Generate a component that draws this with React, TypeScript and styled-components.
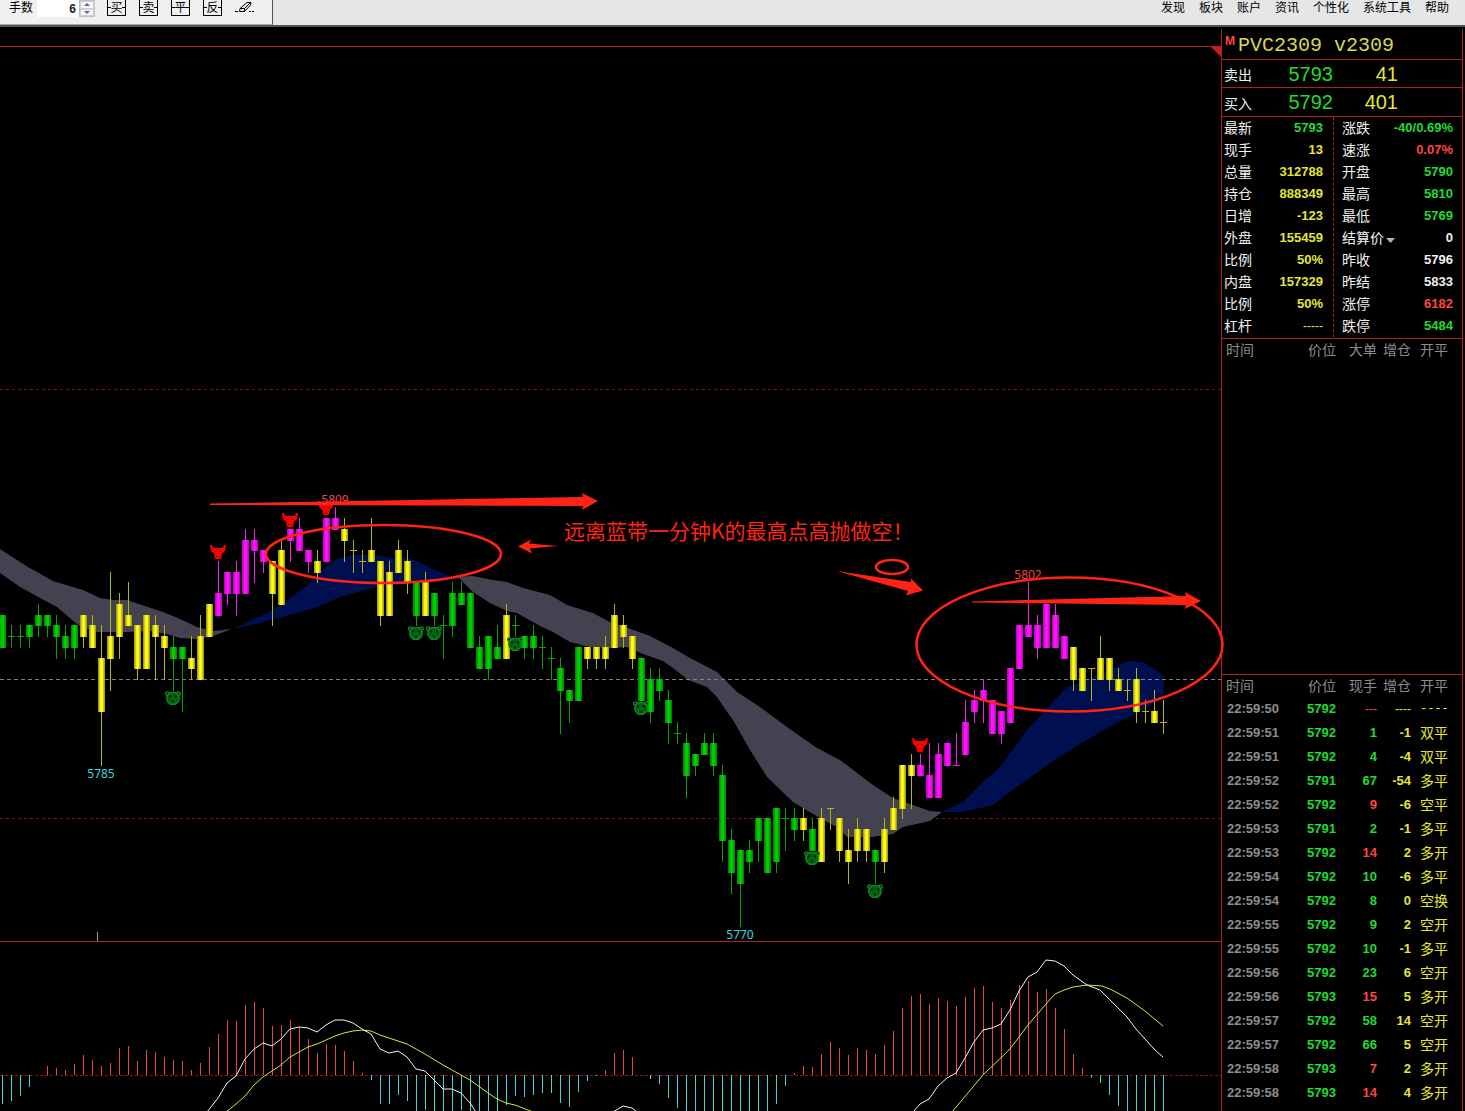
import React from "react";
import styled, { createGlobalStyle } from "styled-components";

const RED_LINE = "#b41e1e";
const COLORS = {
  green: "#1fdc32",
  yellow: "#e6e632",
  red: "#ff4646",
  white: "#f0f0f0",
  gray: "#8c8c8c",
};
type Tone = keyof typeof COLORS;

const GlobalStyle = createGlobalStyle`
  * { box-sizing: border-box; }
  body { margin: 0; background: #000; overflow: hidden; font-family: "Liberation Sans", "Noto Sans CJK SC", sans-serif; }
  button, input { font: inherit; }
`;

/* ---------- shell ---------- */
const Shell = styled.div`
  display: flex;
  flex-direction: column;
  height: 100vh;
  overflow: hidden;
  background: #000;
`;
const Header = styled.header`
  display: flex;
  justify-content: space-between;
  align-items: flex-start;
  flex: none;
  height: 27px;
  background: #e6e6e6;
  border-bottom: 2px solid #50545a;
  font-size: 12px;
  color: #000;
`;
const Toolbar = styled.div`
  display: flex;
  align-items: flex-start;
  gap: 12px;
  height: 25px;
  padding: 0 17px 0 9px;
  background: #f0f0f0;
  border-right: 1px solid #50545a;
  border-bottom: 1px solid #a0a8b0;
`;
const LotField = styled.div`
  display: flex;
  align-items: flex-start;
  line-height: 16px;
`;
const LotLabel = styled.label`
  width: 28px;
`;
const LotInput = styled.input`
  width: 42px;
  height: 17px;
  padding: 0 3px;
  border: 0;
  background: #fff;
  text-align: right;
  font-weight: 700;
  color: #222;
`;
const Spinner = styled.div`
  display: flex;
  flex-direction: column;
  width: 16px;
  height: 17px;
  border: 1px solid #c0c0c0;
`;
const SpinButton = styled.button`
  display: flex;
  flex: 1;
  align-items: center;
  justify-content: center;
  min-height: 0;
  padding: 0;
  border: 1px solid #d0d0d0;
  background: #f6f6f6;
`;
const Tools = styled.div`
  display: flex;
  gap: 13px;
`;
const ToolButton = styled.button`
  position: relative;
  width: 19px;
  height: 16px;
  padding: 0;
  border: 1px solid #000;
  border-top-width: 0;
  background: transparent;
  color: #000;
  font-size: 12px;
  line-height: 14px;
  &::before, &::after {
    content: "";
    position: absolute;
    top: 7px;
    width: 3px;
    height: 1px;
    background: #000;
  }
  &::before { left: 0; }
  &::after { right: 0; }
`;
const EraserButton = styled.button`
  width: 20px;
  height: 16px;
  padding: 0;
  border: 0;
  background: transparent;
  svg { display: block; }
`;
const Menu = styled.nav`
  display: flex;
  gap: 14px;
  padding-right: 16px;
  line-height: 16px;
`;
const MenuLink = styled.a`
  color: #000;
  text-decoration: none;
`;
const Body = styled.main`
  display: flex;
  flex: 1;
  min-height: 0;
`;

/* ---------- charts ---------- */
const ChartArea = styled.section`
  position: relative;
  z-index: 1;
  flex: 1;
  min-width: 0;
`;
const ChartStrip = styled.div`
  position: relative;
  height: 20px;
  border-bottom: 1px solid ${RED_LINE};
`;
const Corner = styled.svg`
  position: absolute;
  right: 0;
  top: 20px;
`;
const ChartSvg = styled.svg`
  display: block;
  width: 100%;
  overflow: visible;
`;
const IndicatorPane = styled.div`
  border-top: 1px solid ${RED_LINE};
`;
const PriceLabel = styled.text<{ $color: string }>`
  font-family: "Noto Sans", sans-serif;
  font-size: 12px;
  text-anchor: middle;
  fill: ${(p) => p.$color};
`;
const NoteText = styled.text`
  font-family: "Noto Sans CJK SC", sans-serif;
  font-size: 21px;
  font-weight: 400;
  fill: #ff2314;
`;

const tickY = (p: number) => Math.floor(926 - (p - 5770) * 10.72);
const barX = (i: number) => 2 + 9 * i;

// colour, high, body top, body bottom, low (offsets from 5700)
const CANDLES = `g99,99,96,96 g98,97,97,96 g98,97,97,96 g98,98,97,96 g100,99,98,97 g99,99,98,97 g99,98,97,95 g98,97,96,95 g98,98,96,95 y99,99,97,96
y99,98,96,96 y98,95,90,85 y103,97,95,92 y101,100,97,95 y102,99,98,98 y98,98,94,93 y99,99,94,94 y99,98,97,93 y98,97,96,93 g97,96,95,92
g96,96,95,90 y97,95,94,93 y99,97,93,93 y100,100,97,97 m104,101,99,99 m103,103,101,100 m104,103,101,99 m107,106,101,101 m107,106,105,102 m105,105,104,103
y104,104,101,98 y106,105,100,100 m107,107,106,104 m108,107,105,105 m105,105,104,103 y105,104,103,102 m108,108,104,104 m109,108,107,107 y108,107,106,104 y106,105,105,103
y105,104,104,103 y108,105,104,104 y104,104,99,98 y104,103,99,99 y106,105,103,103 y105,104,102,101 g102,102,99,98 y103,102,99,99 g101,101,99,98 g99,98,98,95
g102,101,98,97 g102,101,100,100 g101,101,96,96 g97,96,94,94 g97,97,94,93 g98,96,95,95 y100,99,95,95 g99,98,98,97 g97,97,96,95 g98,97,96,95
g97,96,96,94 g96,95,95,93 g95,94,92,88 g92,92,91,89 g96,96,91,91 y96,96,95,94 y96,96,95,94 y97,96,95,94 y100,99,96,96 y99,98,97,96
y97,97,95,94 g95,95,91,91 g94,93,90,89 g94,93,92,91 g92,91,89,87 g89,88,88,87 g88,87,84,82 g86,86,85,84 g88,87,86,86 g88,87,85,84
g85,84,78,76 g79,78,75,73 g77,77,74,70 g78,77,76,75 g80,80,78,76 g80,80,75,75 g81,81,76,75 g81,80,80,77 g81,80,79,78 y81,80,79,78
g80,79,77,77 y81,80,76,76 y81,81,81,79 y80,80,77,76 y79,77,76,74 y80,79,77,76 y79,79,77,76 g77,77,76,74 y80,79,76,75 y82,81,79,79
y85,85,81,80 y86,85,84,81 m86,85,84,84 m87,84,82,82 m87,86,82,82 m87,87,85,85 m88,85,85,85 m91,89,86,86 m92,91,90,89 m93,92,91,89
m91,91,88,88 m90,90,88,87 m94,94,89,89 m98,98,94,94 m102,98,97,97 m99,98,96,95 m100,100,96,96 m100,99,96,96 m97,97,95,95 y96,96,93,92
y94,94,92,92 y94,94,94,91 y97,95,93,93 y95,95,93,92 y94,93,92,92 y93,92,92,91 y94,93,90,89 y91,90,90,89 y92,90,89,89 y91,89,89,88`
  .split(/\s+/)
  .map((s) => {
    const [high, top, bottom, low] = s.slice(1).split(",").map((n) => 5700 + Number(n));
    return { kind: s[0], high, top, bottom, low };
  });

const WICK: Record<string, string> = { g: "#0aa00a", y: "#b4b414", m: "#e628e6" };

// momentum histogram, three units to a pixel
const HISTOGRAM = [
  -86, -77, -62, -35, 0, 26, 22, 14, 34, 61, 46, 26, 37, 82, 88, 43, 74, 70, 55, 46, 43, 16, 37, 85, 124, 166, 163, 211, 220, 202,
  148, 150, 166, 145, 109, 67, 94, 91, 73, 43, 7, -14, -86, -86, -59, -77, -120, -104, -120, -120, -120, -104, -120, -120, -120, -120, -89, -62, -65, -59,
  -53, -53, -83, -95, -50, -17, -3, 16, 67, 76, 55, 0, -11, -26, -68, -98, -120, -120, -120, -120, -120, -120, -120, -120, -120, -120, -86, -32, 7, 28,
  25, 64, 100, 82, 61, 82, 76, 64, 91, 133, 202, 238, 244, 214, 232, 223, 208, 235, 262, 268, 220, 202, 226, 271, 283, 250, 259, 202, 139, 64,
  22, -8, -23, -59, -92, -120, -120, -120, -120, -120,
];

const FAST_LINES = [
  "207,1112 218,1098 227,1083 236,1076 245,1059 254,1049 263,1043 272,1046 281,1039 290,1029 299,1027 308,1028 317,1032 326,1025 335,1020 344,1020 353,1023 362,1029 371,1034 380,1049 389,1053 398,1051 407,1057 416,1069 425,1071 443,1089 452,1089 461,1093 470,1103 476,1112",
  "613,1112 623,1106 632,1108 637,1112",
  "913,1112 920,1104 929,1099 938,1086 947,1078 956,1073 965,1058 974,1042 983,1030 992,1028 1001,1024 1010,1010 1019,991 1028,977 1037,972 1046,960 1055,961 1064,966 1073,975 1087,985 1100,990 1118,1008 1127,1017 1136,1029 1145,1039 1154,1049 1163,1057",
];
const SLOW_LINES = [
  "226,1112 236,1104 245,1096 254,1085 263,1077 272,1071 281,1065 290,1057 299,1052 308,1047 317,1044 326,1040 335,1036 344,1033 353,1031 362,1030 371,1031 380,1035 398,1041 407,1044 425,1054 443,1065 461,1075 470,1080 488,1093 497,1099 506,1103 515,1105 533,1112",
  "952,1112 983,1075 1010,1049 1028,1025 1046,1004 1055,994 1064,990 1073,987 1087,985 1102,986 1110,989 1127,998 1145,1011 1163,1026",
];

const GRAY_BANDS = [
  "0,549 28,567 53,581 83,590 100,598 113,600 127,600 142,605 163,612 180,619 197,627 213,631 232,629 213,636 197,639 180,638 167,634 150,631 127,632 97,632 80,626 72,620 57,607 40,598 20,587 0,573",
  "453,577 473,576 493,580 507,582 523,588 550,595 567,605 593,613 610,622 620,625 650,636 673,648 690,658 717,672 737,692 760,707 787,727 817,748 840,760 873,785 893,798 910,804 930,811 942,812 930,821 903,827 893,834 872,837 847,837 837,827 823,820 793,802 767,777 750,750 733,720 725,709 717,697 707,687 688,680 673,668 663,661 643,654 627,647 610,648 590,647 570,642 553,632 540,626 517,613 507,611 490,603 473,592 460,579",
];
const BLUE_BANDS = [
  "233,629 250,621 267,613 280,605 297,593 310,583 322,570 337,559 353,555 377,555 390,558 403,557 417,561 433,569 452,577 462,578 440,580 400,583 372,588 340,597 317,607 283,617 267,621 247,626",
  "942,812 963,802 983,782 1000,767 1027,730 1050,705 1067,687 1093,677 1117,666 1127,661 1143,662 1153,668 1164,677 1164,697 1137,713 1113,725 1080,744 1053,761 1027,780 1010,792 993,805 963,812",
];

const BULLS = [[218, 552], [290, 520], [326, 508], [920, 745]];
const BEARS = [[173, 698], [416, 633], [434, 633], [515, 644], [641, 708], [812, 858], [875, 891]];

const Bull = ({ x, y }: { x: number; y: number }) => (
  <g transform={`translate(${x - 8} ${y - 7})`}>
    <path
      fill="#ff0000"
      d="M0.5 0H2L2.5 2L4 3H12L13.5 2L14 0H15.5L16 2L15 4L15.5 5L14 7L12.5 8L11.5 10V13L10 14H6L4.5 13V10L3.5 8L2 7L0.5 5L1 4L0 2Z"
    />
    <path fill="#500000" d="M5 6h1.4v1H5z M9.6 6H11v1H9.6z M6.2 11.4h1v1h-1z M8.8 11.4h1v1h-1z" />
  </g>
);
const Bear = ({ x, y }: { x: number; y: number }) => (
  <g transform={`translate(${x - 8} ${y - 7})`} fill="none" stroke="#0a8c20">
    <circle cx="2.4" cy="2.6" r="1.8" fill="#001c04" strokeWidth="1.3" />
    <circle cx="13.6" cy="2.6" r="1.8" fill="#001c04" strokeWidth="1.3" />
    <path fill="#065a14" strokeWidth="1.3" d="M4 2.5L6 1.6H10L12 2.5L14 5L14.4 8L13 11L10.5 13.4H5.5L3 11L1.6 8L2 5Z" />
    <path stroke="none" fill="#001c04" d="M4 4.6h2v1.6H4z M10 4.6h2v1.6h-2z" />
    <ellipse cx="8" cy="9.8" rx="2.2" ry="2.6" fill="#001c04" strokeWidth="1" />
    <path strokeWidth="1.4" d="M7.2 9.4h1.6" />
  </g>
);

const PriceChart = () => (
  <ChartSvg viewBox="0 47 1221 894" role="img" aria-label="PVC2309 K线图">
    <defs>
      {[["g", "#007800", "#00d200"], ["y", "#968c00", "#ffff1e"], ["m", "#b400b4", "#ff14ff"]].map(([id, edge, mid]) => (
        <linearGradient id={`body-${id}`} key={id}>
          <stop offset="0" stopColor={edge} />
          <stop offset="0.4" stopColor={mid} />
          <stop offset="0.6" stopColor={mid} />
          <stop offset="1" stopColor={edge} />
        </linearGradient>
      ))}
    </defs>
    <path d="M0 389.5H1221M0 818.5H1221" stroke="#7d1414" strokeDasharray="3 3" />
    {GRAY_BANDS.map((p) => <polygon key={p} points={p} fill="#444150" />)}
    {BLUE_BANDS.map((p) => <polygon key={p} points={p} fill="#000f50" />)}
    <path d="M0 679.5H1221" stroke="#828282" strokeDasharray="4 3" />
    <g shapeRendering="crispEdges">
      {CANDLES.map((c, i) => {
        const x = barX(i);
        const top = tickY(c.top);
        const doji = c.top === c.bottom;
        return (
          <g key={i}>
            <rect x={x} y={tickY(c.high)} width="1" height={tickY(c.low) - tickY(c.high) + 1} fill={WICK[c.kind]} />
            <rect x={x - 3} y={top} width="7" height={doji ? 1 : tickY(c.bottom) - top + 1} fill={doji ? WICK[c.kind] : `url(#body-${c.kind})`} />
          </g>
        );
      })}
    </g>
    {BULLS.map(([x, y]) => <Bull key={x} x={x} y={y} />)}
    {BEARS.map(([x, y]) => <Bear key={x} x={x} y={y} />)}
    <PriceLabel x="335" y="504" $color="#f04646">5809</PriceLabel>
    <PriceLabel x="1028" y="579" $color="#f04646">5802</PriceLabel>
    <PriceLabel x="101" y="778" $color="#32dcdc">5785</PriceLabel>
    <PriceLabel x="740" y="939" $color="#32dcdc">5770</PriceLabel>
    <path d="M97.5 932V941" stroke="#a0a0a0" />
    <g fill="#ff2314">
      <path d="M210 503.5L583 497L582 493L598 501L582 510L583 506L210 505Z" />
      <path d="M518 546.5L531 539.5L529 543.5L558 546L530 548.5L532 553.5Z" />
      <path d="M836.5 571L911 582L910.5 578L923 590.5L906 595.5L908 591Z" />
      <path d="M972 601.5L1186 596L1185 592L1201 601L1185 609L1186 605L972 602.5Z" />
    </g>
    <g fill="none" stroke="#ff2314" strokeWidth="2.6">
      <ellipse cx="383.5" cy="554" rx="117.5" ry="29" />
      <ellipse cx="892" cy="567" rx="16" ry="7" />
      <ellipse cx="1069.5" cy="644.5" rx="153" ry="67" />
    </g>
    <NoteText x="564" y="539">远离蓝带一分钟K的最高点高抛做空！</NoteText>
  </ChartSvg>
);

const IndicatorChart = () => (
  <IndicatorPane>
    <ChartSvg viewBox="0 942 1221 169" role="img" aria-label="MACD">
      <path d="M0 1075.5H1221" stroke="#8c1414" strokeDasharray="3 2" />
      <g shapeRendering="crispEdges">
        {HISTOGRAM.map((v, i) =>
          v === 0 ? null : (
            <rect key={i} x={barX(i)} y={v > 0 ? Math.round(1075 - v / 3) : 1075} width="1" height={Math.max(1, Math.round(Math.abs(v) / 3))} fill={v > 0 ? "#e64646" : "#46d2d7"} />
          ),
        )}
      </g>
      {SLOW_LINES.map((p) => <polyline key={p} points={p} fill="none" stroke="#d7e63c" />)}
      {FAST_LINES.map((p) => <polyline key={p} points={p} fill="none" stroke="#f5f5f5" />)}
    </ChartSvg>
  </IndicatorPane>
);

/* ---------- quote panel ---------- */
const QuotePanel = styled.aside`
  flex: none;
  width: 242px;
  margin: 2px 2px 0 0;
  border: 1px solid ${RED_LINE};
  border-width: 0 1px 0 1px;
  overflow: hidden;
  font-size: 14px;
  color: ${COLORS.white};
`;
const Title = styled.h1`
  display: flex;
  align-items: flex-start;
  gap: 2px;
  height: 31px;
  margin: 0;
  padding: 4px 0 0 3px;
  border-bottom: 1px solid ${RED_LINE};
  font-family: "Liberation Mono", monospace;
  font-size: 20px;
  font-weight: 400;
  line-height: 26px;
  white-space: pre;
  color: #d7d750;
`;
const Mark = styled.span`
  width: 11px;
  font: 700 12px/16px "Liberation Sans", sans-serif;
  color: ${COLORS.red};
`;
const BookRow = styled.div<{ $height: number }>`
  display: grid;
  grid-template-columns: 40px 69px 65px;
  align-items: center;
  height: ${(p) => p.$height}px;
  padding: 1px 0 0 2px;
  border-bottom: 1px solid ${RED_LINE};
`;
const BookValue = styled.span<{ $tone: Tone }>`
  font-size: 20px;
  text-align: right;
  color: ${(p) => COLORS[p.$tone]};
`;
const Stats = styled.div`
  display: grid;
  grid-template-columns: 112px 1fr;
  height: 222px;
  border-bottom: 1px solid ${RED_LINE};
`;
const StatList = styled.dl<{ $divider?: boolean }>`
  margin: 0;
  height: 220px;
  padding: ${(p) => (p.$divider ? "0 10px 0 2px" : "0 9px 0 8px")};
  border-right: ${(p) => (p.$divider ? `1px dashed ${RED_LINE}` : "0")};
`;
const StatRow = styled.div`
  display: flex;
  justify-content: space-between;
  align-items: center;
  height: 22px;
  line-height: 22px;
`;
const StatName = styled.dt`
  display: flex;
  align-items: center;
`;
const StatValue = styled.dd<{ $tone: Tone; $dash?: boolean }>`
  margin: 0;
  font-size: ${(p) => (p.$dash ? 12 : 13)}px;
  font-weight: ${(p) => (p.$dash ? 400 : 700)};
  color: ${(p) => COLORS[p.$tone]};
`;
const Drop = styled.button`
  display: flex;
  padding: 4px 0 0 2px;
  border: 0;
  background: transparent;
`;
const BigOrders = styled.div`
  height: 336px;
  border-bottom: 1px solid ${RED_LINE};
`;
const TickTable = styled.table`
  width: 240px;
  table-layout: fixed;
  border-collapse: collapse;
`;
const HeadCell = styled.th<{ $left?: number; $width: number }>`
  width: ${(p) => p.$width}px;
  height: 22px;
  padding: 0 0 0 ${(p) => p.$left ?? 0}px;
  font-weight: 400;
  line-height: 22px;
  text-align: ${(p) => (p.$left ? "left" : "right")};
  color: ${COLORS.gray};
`;
const Cell = styled.td<{ $tone: Tone; $dash?: boolean }>`
  height: 24px;
  padding: 0;
  font-size: ${(p) => (p.$dash ? 12 : 13)}px;
  font-weight: ${(p) => (p.$dash ? 400 : 700)};
  line-height: 24px;
  text-align: right;
  color: ${(p) => COLORS[p.$tone]};
`;
const TimeCell = styled(Cell)`
  padding-left: 5px;
  text-align: left;
`;
const TypeCell = styled(Cell)`
  padding-left: 9px;
  font-family: ${(p) => (p.$dash ? '"Liberation Mono", monospace' : "inherit")};
  font-size: ${(p) => (p.$dash ? 12 : 14)}px;
  font-weight: 400;
  text-align: left;
`;

const LEFT_STATS: [string, string, Tone][] = [
  ["最新", "5793", "green"], ["现手", "13", "yellow"], ["总量", "312788", "yellow"], ["持仓", "888349", "yellow"], ["日增", "-123", "yellow"],
  ["外盘", "155459", "yellow"], ["比例", "50%", "yellow"], ["内盘", "157329", "yellow"], ["比例", "50%", "yellow"], ["杠杆", "-----", "yellow"],
];
const RIGHT_STATS: [string, string, Tone][] = [
  ["涨跌", "-40/0.69%", "green"], ["速涨", "0.07%", "red"], ["开盘", "5790", "green"], ["最高", "5810", "green"], ["最低", "5769", "green"],
  ["结算价", "0", "white"], ["昨收", "5796", "white"], ["昨结", "5833", "white"], ["涨停", "6182", "red"], ["跌停", "5484", "green"],
];
const TICKS: [string, string, string, string, string, Tone][] = [
  ["22:59:50", "5792", "---", "----", "----", "red"],
  ["22:59:51", "5792", "1", "-1", "双平", "green"],
  ["22:59:51", "5792", "4", "-4", "双平", "green"],
  ["22:59:52", "5791", "67", "-54", "多平", "green"],
  ["22:59:52", "5792", "9", "-6", "空平", "red"],
  ["22:59:53", "5791", "2", "-1", "多平", "green"],
  ["22:59:53", "5792", "14", "2", "多开", "red"],
  ["22:59:54", "5792", "10", "-6", "多平", "green"],
  ["22:59:54", "5792", "8", "0", "空换", "green"],
  ["22:59:55", "5792", "9", "2", "空开", "green"],
  ["22:59:55", "5792", "10", "-1", "多平", "green"],
  ["22:59:56", "5792", "23", "6", "空开", "green"],
  ["22:59:56", "5793", "15", "5", "多开", "red"],
  ["22:59:57", "5792", "58", "14", "空开", "green"],
  ["22:59:57", "5792", "66", "5", "空开", "green"],
  ["22:59:58", "5793", "7", "2", "多开", "red"],
  ["22:59:58", "5793", "14", "4", "多开", "red"],
];

const TableHead = ({ volume }: { volume: string }) => (
  <thead>
    <tr>
      <HeadCell $width={70} $left={4}>时间</HeadCell>
      <HeadCell $width={44}>价位</HeadCell>
      <HeadCell $width={41}>{volume}</HeadCell>
      <HeadCell $width={34}>增仓</HeadCell>
      <HeadCell $width={51} $left={9}>开平</HeadCell>
    </tr>
  </thead>
);

const StatColumn = ({ rows, divider }: { rows: [string, string, Tone][]; divider?: boolean }) => (
  <StatList $divider={divider}>
    {rows.map(([name, value, tone], i) => (
      <StatRow key={i}>
        <StatName>
          {name}
          {name === "结算价" && (
            <Drop aria-label="切换结算价">
              <svg width="9" height="5"><path d="M0 0H9L4.5 5Z" fill="#b4b4b4" /></svg>
            </Drop>
          )}
        </StatName>
        <StatValue $tone={tone} $dash={value.startsWith("--")}>{value}</StatValue>
      </StatRow>
    ))}
  </StatList>
);

export default function App() {
  return (
    <Shell>
      <GlobalStyle />
      <Header>
        <Toolbar>
          <LotField>
            <LotLabel htmlFor="lots">手数</LotLabel>
            <LotInput id="lots" defaultValue="6" />
            <Spinner>
              <SpinButton aria-label="增加"><svg width="6" height="3"><path d="M0 3L3 0L6 3Z" fill="#5a6e96" /></svg></SpinButton>
              <SpinButton aria-label="减少"><svg width="6" height="3"><path d="M0 0L3 3L6 0Z" fill="#5a6e96" /></svg></SpinButton>
            </Spinner>
          </LotField>
          <Tools>
            {["买", "卖", "平", "反"].map((t) => <ToolButton key={t}>{t}</ToolButton>)}
            <EraserButton aria-label="清除">
              <svg width="20" height="16" fill="none" stroke="#000">
                <path d="M0 11.5H3M14 11.5H16M17 11.5H19M4.5 11.5L5 8.5L12 2.5H16L15.5 5L9.5 11.5ZM5 8.5H9.5L15.5 2.5M9.5 8.5V11.5" />
              </svg>
            </EraserButton>
          </Tools>
        </Toolbar>
        <Menu>
          {["发现", "板块", "账户", "资讯", "个性化", "系统工具", "帮助"].map((m) => <MenuLink key={m} href="#">{m}</MenuLink>)}
        </Menu>
      </Header>
      <Body>
        <ChartArea>
          <ChartStrip>
            <Corner width="10" height="10"><path d="M0 0H10V10Z" fill="#c81e1e" /></Corner>
          </ChartStrip>
          <PriceChart />
          <IndicatorChart />
        </ChartArea>
        <QuotePanel>
          <Title><Mark>M</Mark>PVC2309 v2309</Title>
          <BookRow $height={28}>
            <span>卖出</span>
            <BookValue $tone="green">5793</BookValue>
            <BookValue $tone="yellow">41</BookValue>
          </BookRow>
          <BookRow $height={29}>
            <span>买入</span>
            <BookValue $tone="green">5792</BookValue>
            <BookValue $tone="yellow">401</BookValue>
          </BookRow>
          <Stats>
            <StatColumn rows={LEFT_STATS} divider />
            <StatColumn rows={RIGHT_STATS} />
          </Stats>
          <BigOrders>
            <TickTable><TableHead volume="大单" /></TickTable>
          </BigOrders>
          <TickTable>
            <TableHead volume="现手" />
            <tbody>
              {TICKS.map(([time, price, volume, change, type, tone], i) => {
                const dash = volume.startsWith("--");
                return (
                  <tr key={i}>
                    <TimeCell $tone="gray">{time}</TimeCell>
                    <Cell $tone="green">{price}</Cell>
                    <Cell $tone={tone} $dash={dash}>{volume}</Cell>
                    <Cell $tone="yellow" $dash={dash}>{change}</Cell>
                    <TypeCell $tone="yellow" $dash={dash}>{type}</TypeCell>
                  </tr>
                );
              })}
            </tbody>
          </TickTable>
        </QuotePanel>
      </Body>
    </Shell>
  );
}
